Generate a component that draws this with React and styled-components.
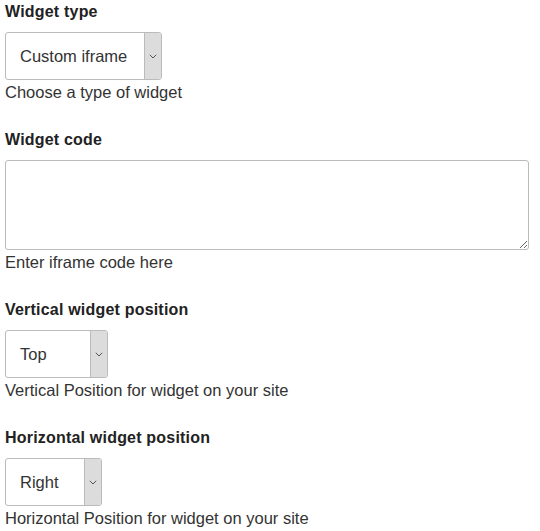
import React from "react";
import styled, { createGlobalStyle } from "styled-components";

const GlobalStyle = createGlobalStyle`
  body {
    margin: 0;
    background: #fff;
    font-family: "Liberation Sans", Arial, sans-serif;
    color: #333;
  }
`;

const Form = styled.div`
  padding: 0 5px;
  display: flex;
  flex-direction: column;
  gap: 24px;
`;

const Field = styled.div`
  display: flex;
  flex-direction: column;
  align-items: flex-start;
`;

const Label = styled.label`
  font-size: 16px;
  line-height: 24px;
  font-weight: 700;
  letter-spacing: 0.2px;
  color: #222;
  margin-bottom: 8px;
`;

const SelectBox = styled.div`
  display: flex;
  width: ${(p) => p.width}px;
  height: 48px;
  box-sizing: border-box;
  border: 1px solid #bbb;
  border-radius: 3px;
  background: #fff;
  overflow: hidden;
`;

const SelectValue = styled.span`
  flex: 1;
  display: flex;
  align-items: center;
  padding-left: 14px;
  font-size: 16.5px;
  color: #333;
`;

const Arrow = styled.span`
  width: 16px;
  border-left: 1px solid #bbb;
  background: #dcdcdc;
  display: flex;
  align-items: center;
  justify-content: center;
`;

const TextArea = styled.textarea`
  width: 524px;
  height: 90px;
  box-sizing: border-box;
  border: 1px solid #bbb;
  border-radius: 3px;
  margin: 0;
  font-family: inherit;
`;

const Help = styled.span`
  font-size: 16.5px;
  line-height: 24px;
  color: #333;
`;

const Chevron = () => (
  <svg width="8" height="5" viewBox="0 0 8 5">
    <path d="M0.8 0.8 L4 4 L7.2 0.8" fill="none" stroke="#555" strokeWidth="1" />
  </svg>
);

const Select = ({ value, width }) => (
  <SelectBox width={width}>
    <SelectValue>{value}</SelectValue>
    <Arrow>
      <Chevron />
    </Arrow>
  </SelectBox>
);

const App = () => (
  <>
    <GlobalStyle />
    <Form>
      <Field>
        <Label>Widget type</Label>
        <Select value="Custom iframe" width={157} />
        <Help>Choose a type of widget</Help>
      </Field>
      <Field>
        <Label>Widget code</Label>
        <TextArea />
        <Help>Enter iframe code here</Help>
      </Field>
      <Field>
        <Label>Vertical widget position</Label>
        <Select value="Top" width={103} />
        <Help>Vertical Position for widget on your site</Help>
      </Field>
      <Field>
        <Label>Horizontal widget position</Label>
        <Select value="Right" width={97} />
        <Help>Horizontal Position for widget on your site</Help>
      </Field>
    </Form>
  </>
);

export default App;
